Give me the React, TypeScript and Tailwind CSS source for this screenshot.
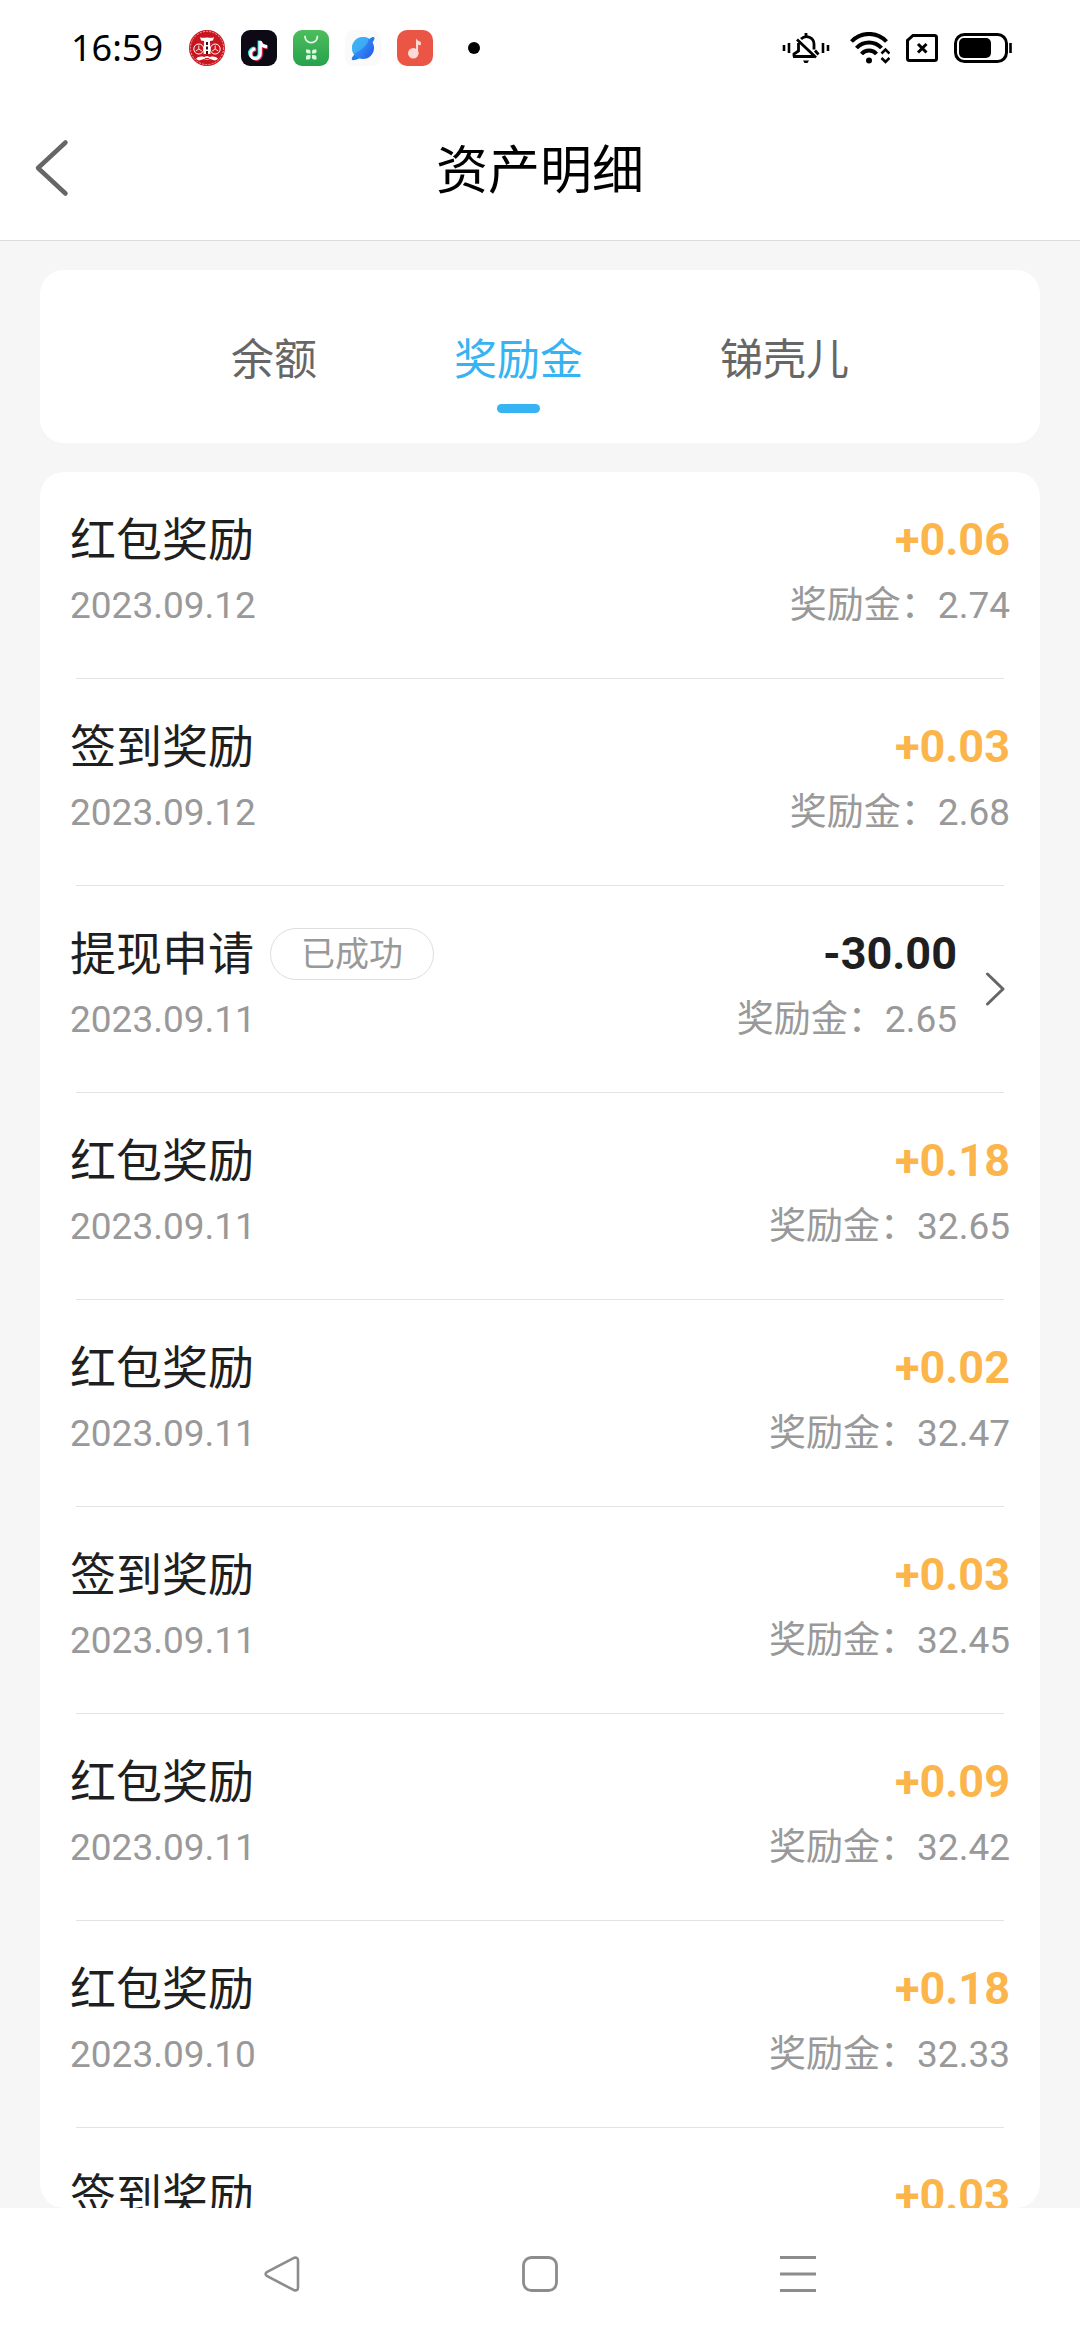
import React, { useState } from "react";
import { clsx } from "clsx";

interface AssetRecord {
    id: number;
    title: string;
    date: string;
    amount: string;
    balance: string;
    status?: string;
}

const TABS = ["余额", "奖励金", "锑壳儿"];

const RECORDS: AssetRecord[] = [
    { id: 1, title: "红包奖励", date: "2023.09.12", amount: "+0.06", balance: "2.74" },
    { id: 2, title: "签到奖励", date: "2023.09.12", amount: "+0.03", balance: "2.68" },
    { id: 3, title: "提现申请", date: "2023.09.11", amount: "-30.00", balance: "2.65", status: "已成功" },
    { id: 4, title: "红包奖励", date: "2023.09.11", amount: "+0.18", balance: "32.65" },
    { id: 5, title: "红包奖励", date: "2023.09.11", amount: "+0.02", balance: "32.47" },
    { id: 6, title: "签到奖励", date: "2023.09.11", amount: "+0.03", balance: "32.45" },
    { id: 7, title: "红包奖励", date: "2023.09.11", amount: "+0.09", balance: "32.42" },
    { id: 8, title: "红包奖励", date: "2023.09.10", amount: "+0.18", balance: "32.33" },
    { id: 9, title: "签到奖励", date: "2023.09.10", amount: "+0.03", balance: "32.15" },
];

function NotificationIcons() {
    return (
        <div className="flex items-center gap-4">
            {/* Opera mask */}
            <svg width="36" height="36" viewBox="0 0 36 36">
                <circle cx="18" cy="18" r="18" fill="#c9151e" />
                <circle cx="18" cy="18" r="16.6" fill="none" stroke="#f3c9c9" strokeWidth="0.8" strokeDasharray="2 1.2" />
                <path d="M11 7c2 1.500 4 .5 7 .5s5 1 7-.5l-1 3.500-3 .5.400 13h-6.800l.400-13-3-.5z" fill="#fff" />
                <circle cx="9.800" cy="19" r="5" fill="#c9151e" stroke="#fff" strokeWidth="1" />
                <circle cx="26.200" cy="19" r="5" fill="#c9151e" stroke="#fff" strokeWidth="1" />
                <path d="M9.800 15.500v3.500l-3 2M9.800 19l3 2M26.200 15.500v3.500l-3 2M26.200 19l3 2" stroke="#fff" strokeWidth="0.9" fill="none" />
                <path d="M7 29c2-2.500 5-3 8-2l3-1 3 1c3-1 6-.5 8 2l-3 1.500-5-1.500-3 1-3-1-5 1.500z" fill="#fff" />
                <path d="M18 12v14" stroke="#3a1014" strokeWidth="2" strokeDasharray="3 1.500" />
                <path d="M15.500 28h5l-1 1.200h-3z" fill="#c9151e" />
            </svg>
            {/* TikTok */}
            <svg width="36" height="36" viewBox="0 0 36 36">
                <rect width="36" height="36" rx="9" fill="#0d0a16" />
                <g fill="none" strokeWidth="3.200">
                    <path d="M18.200 10.500v12.500a4.800 4.800 0 1 1-4.800-4.800M18.200 11c.5 3 3 5 6.500 5.200" stroke="#28e5e4" />
                    <path d="M20.200 12v12.500a4.800 4.800 0 1 1-4.800-4.800M20.200 12.500c.5 3 3 5 6.500 5.200" stroke="#f4305c" />
                    <path d="M19.200 11v12.700a4.800 4.800 0 1 1-4.800-4.800M19.200 11.500c.5 3.200 3.200 5 7 5.200" stroke="#fff" />
                </g>
            </svg>
            {/* App market */}
            <svg width="36" height="36" viewBox="0 0 36 36">
                <defs>
                    <linearGradient id="market" x1="0" y1="0" x2="0" y2="1">
                        <stop offset="0" stopColor="#4cbd5e" />
                        <stop offset="1" stopColor="#27a24b" />
                    </linearGradient>
                </defs>
                <rect width="36" height="36" rx="9" fill="url(#market)" />
                <path d="M12 6.500a6.200 6.200 0 0 0 12.400 0" stroke="#e6f8e8" strokeWidth="1.800" fill="none" strokeLinecap="round" />
                <g fill="#dcf5df">
                    <path d="M13 19.500h2.500a2 2 0 0 1 2 2v2H15a2 2 0 0 1-2-2z" />
                    <path d="M23.500 19.500H21a2 2 0 0 0-2 2v2h2.500a2 2 0 0 0 2-2z" />
                    <path d="M13 29.500h2.500a2 2 0 0 0 2-2V25H15a2 2 0 0 0-2 2z" />
                    <path d="M23.500 29.500H21a2 2 0 0 1-2-2V25h2.500a2 2 0 0 1 2 2z" />
                </g>
            </svg>
            {/* Browser */}
            <svg width="36" height="36" viewBox="0 0 36 36">
                <defs>
                    <linearGradient id="planet" x1="0" y1="0" x2="1" y2="0.600">
                        <stop offset="0" stopColor="#35b6f5" />
                        <stop offset="1" stopColor="#2a62ee" />
                    </linearGradient>
                </defs>
                <rect width="36" height="36" rx="9" fill="#fafafa" />
                <path d="M25 8.500C27 7 29.300 6.500 29.500 8c.100 1.300-.8 2.800-2 4.500L14 28.500c-3.500 1.600-6.700 2.300-7.200 1-.4-1.200.8-3 2.200-4.500z" fill="#237be9" />
                <circle cx="18" cy="18" r="11" fill="url(#planet)" />
                <path d="M8 13.500A11 11 0 0 1 23 8.200c2 3-3 10.800-14.500 15.500A11 11 0 0 1 8 13.500z" fill="#45b8f7" opacity="0.700" />
            </svg>
            {/* Music */}
            <svg width="36" height="36" viewBox="0 0 36 36">
                <rect width="36" height="36" rx="10" fill="#ea5546" />
                <circle cx="16.300" cy="23.300" r="5.300" fill="#fbdad6" />
                <path d="M19 8.500c1 2 3.500 3 4.800 3.200v3.600c-1.300 0-2-.3-2.700-.8v9H19z" fill="#fbdad6" />
            </svg>
        </div>
    );
}

function StatusBar() {
    return (
        <div className="flex h-24 items-center justify-between pr-[68px] pl-[71px]">
            <div className="flex items-center">
                <span className="font-['Noto_Sans',sans-serif] text-[36px] leading-[48px] text-black">16:59</span>
                <div className="ml-[26px]">
                    <NotificationIcons />
                </div>
                <span className="ml-[35px] size-3 rounded-full bg-black" />
            </div>

            <div className="flex items-center gap-4">
                {/* Muted bell */}
                <svg width="52" height="32" viewBox="0 0 52 32" fill="none" stroke="#000">
                    <path d="M2 13v6M7 11v10M41 11v10M46 13v6" strokeWidth="2.600" />
                    <path d="M12 24.500v-2.500l4.500-3v-8M19 7c5-5 13-1.500 13 5v5.500" strokeWidth="2.800" />
                    <path d="M11 24.500h21M15 7.500l19 18M33 18.500l3.500 4M24 1v3.500" strokeWidth="2.800" />
                    <path d="M21 28.500h6l-1.500 2.500h-3z" fill="#000" stroke="none" />
                </svg>
                <svg width="40" height="32" viewBox="0 0 40 32" fill="none" stroke="#000">
                    <path d="M1.500 9.500a24 24 0 0 1 35 0" strokeWidth="4" />
                    <path d="M6.500 16a17 17 0 0 1 25 0" strokeWidth="4" />
                    <path d="M11.500 22a10 10 0 0 1 15 0" strokeWidth="4" />
                    <circle cx="19" cy="28.500" r="3" fill="#000" stroke="none" />
                    <path d="M31.500 21.500l4-4 4 4M31.500 26l4 4 4-4" strokeWidth="2.600" />
                </svg>
                <svg width="32" height="28" viewBox="0 0 32 28" fill="none" stroke="#000">
                    <path d="M7 1.500h21.500a2 2 0 0 1 2 2v21a2 2 0 0 1-2 2h-25a2 2 0 0 1-2-2V6.500z" strokeWidth="3" />
                    <path d="M12 10l8.500 8.500M20.500 10L12 18.500" strokeWidth="3" />
                </svg>
                <svg width="58" height="30" viewBox="0 0 58 30">
                    <rect x="1.500" y="1.500" width="51" height="27" rx="9" fill="none" stroke="#000" strokeWidth="3" />
                    <rect x="5" y="5" width="32" height="20" rx="5" fill="#000" />
                    <path d="M56.500 10v10" stroke="#000" strokeWidth="2.600" />
                </svg>
            </div>
        </div>
    );
}

function RecordRow({ record }: { record: AssetRecord }) {
    const isIncome = record.amount.startsWith("+");

    return (
        <li className="group">
            <div className="flex items-center px-[30px]">
                <div className="flex-1 pt-9 pb-[46px]">
                    <div className="flex h-16 items-center gap-4">
                        <h2 className="text-[46px] leading-[64px] text-[#1f1f1f]">{record.title}</h2>
                        {record.status && (
                            <span className="rounded-full border border-[#dedede] px-[30px] text-[34px] leading-[50px] text-[#999999]">
                                {record.status}
                            </span>
                        )}
                    </div>
                    <p className="mt-2 text-[37px] leading-[52px] text-[#999999]">{record.date}</p>
                </div>
                <div className="pt-9 pb-[46px] text-right">
                    <p className={clsx("text-[45px] leading-[64px] font-bold", isIncome ? "text-[#fbb54b]" : "text-[#1f1f1f]")}>
                        {record.amount}
                    </p>
                    <p className="mt-2 text-[37px] leading-[52px] text-[#999999]">奖励金：{record.balance}</p>
                </div>
                {record.status && (
                    <button type="button" aria-label="查看详情" className="pr-[5px] pl-7">
                        <svg width="20" height="36" viewBox="0 0 20 36" fill="none" stroke="#666" strokeWidth="3" strokeLinecap="round" strokeLinejoin="round">
                            <path d="M2.500 3L18 18L2.500 33" />
                        </svg>
                    </button>
                )}
            </div>
            <div className="mx-9 h-px bg-[#e3e3e3] group-last:hidden" />
        </li>
    );
}

export default function App() {
    const [activeTab, setActiveTab] = useState("奖励金");

    return (
        <div className="flex h-screen flex-col bg-white font-['Roboto','Noto_Sans_CJK_SC',sans-serif]">
            <StatusBar />

            <header className="grid h-[145px] grid-cols-[1fr_auto_1fr] items-center border-b border-[#dcdcdc] px-[34px]">
                <button type="button" aria-label="返回" className="justify-self-start">
                    <svg width="36" height="58" viewBox="0 0 36 58" fill="none" stroke="#666" strokeWidth="4.500" strokeLinecap="round" strokeLinejoin="round">
                        <path d="M31.500 3.500L4 29L31.500 54.500" />
                    </svg>
                </button>
                <h1 className="pt-2 text-[52px] leading-[72px] text-black">资产明细</h1>
            </header>

            <main className="flex min-h-0 flex-1 flex-col gap-[29px] bg-[#f6f6f6] px-10 pt-[29px]">
                <nav className="flex justify-center gap-[137px] rounded-3xl bg-white pt-[60px] pb-[30px]">
                    {TABS.map((tab) => (
                        <button
                            key={tab}
                            type="button"
                            onClick={() => setActiveTab(tab)}
                            className={clsx(
                                "flex flex-col items-center gap-[14px] text-[43px] leading-[60px]",
                                activeTab === tab ? "text-[#36b3f3]" : "text-[#666666]"
                            )}
                        >
                            {tab}
                            <span className={clsx("h-[9px] w-[43px] rounded-full", activeTab === tab && "bg-[#36b3f3]")} />
                        </button>
                    ))}
                </nav>

                <ul className="min-h-0 flex-1 overflow-y-auto rounded-3xl bg-white [scrollbar-width:none]">
                    {RECORDS.map((record) => (
                        <RecordRow key={record.id} record={record} />
                    ))}
                </ul>
            </main>

            {/* System navigation */}
            <footer className="flex h-[132px] items-center justify-center gap-[222px]">
                <button type="button" aria-label="后退">
                    <svg width="36" height="36" viewBox="0 0 36 36" fill="none" stroke="#8c8c8c" strokeWidth="2.600" strokeLinejoin="round">
                        <path d="M30 1.800L3.200 15.800Q0 18 3.200 20.200L30 34.200Q34 35.200 34 31.500V4.500Q34 .8 30 1.800z" />
                    </svg>
                </button>
                <button type="button" aria-label="主页">
                    <svg width="36" height="36" viewBox="0 0 36 36" fill="none" stroke="#8c8c8c" strokeWidth="2.800">
                        <rect x="1.500" y="1.500" width="33" height="33" rx="8" />
                    </svg>
                </button>
                <button type="button" aria-label="最近任务">
                    <svg width="36" height="36" viewBox="0 0 36 36" stroke="#8c8c8c" strokeWidth="3">
                        <path d="M0 1.500h36M0 18h36M0 34.500h36" />
                    </svg>
                </button>
            </footer>
        </div>
    );
}
